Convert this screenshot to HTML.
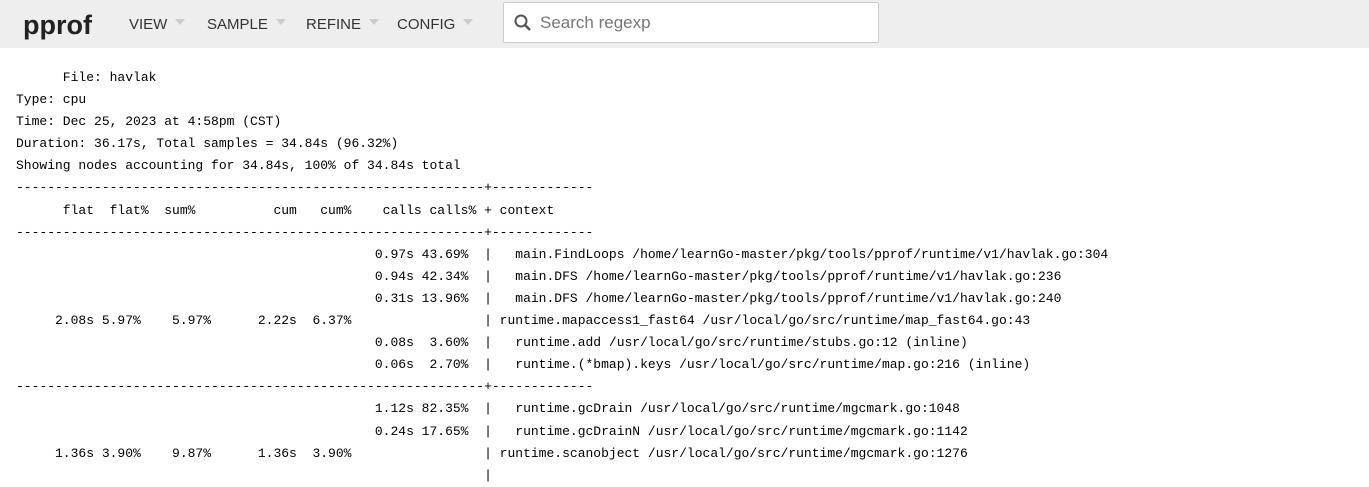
<!DOCTYPE html>
<html><head><meta charset="utf-8"><style>
body{margin:0;background:#fff;width:1369px;height:471px;overflow:hidden;font-family:"Liberation Sans",sans-serif}
.hdr{position:absolute;left:0;top:0;width:1369px;height:48px;background:#eee}
.logo{position:absolute;left:23px;top:10px;font-size:27px;font-weight:bold;color:#222}
.m{position:absolute;top:16px;font-size:15px;color:#333}
.m:after{content:"";display:inline-block;margin-left:8px;border-left:5px solid transparent;border-right:5px solid transparent;border-top:6px solid #ccc;vertical-align:4px}
.search{position:absolute;left:503px;top:2px;width:374px;height:39px;background:#fff;border:1px solid #ccc;border-radius:2px}
.search span{position:absolute;left:36px;top:10px;font-size:17px;color:#777}
pre{position:absolute;left:16px;top:67px;margin:0;font-family:"Liberation Mono",monospace;font-size:13px;line-height:22.1px;color:#000}
</style></head><body>
<div class="hdr">
<div class="logo">pprof</div>
<div class="m" style="left:129px">VIEW</div>
<div class="m" style="left:207px">SAMPLE</div>
<div class="m" style="left:306px">REFINE</div>
<div class="m" style="left:397px">CONFIG</div>
<div class="search"><svg style="position:absolute;left:9px;top:10px" width="20" height="20" viewBox="0 0 20 20"><circle cx="8" cy="8" r="5.5" fill="none" stroke="#555" stroke-width="2"/><path d="M12 12L17 17" stroke="#555" stroke-width="2.5"/></svg><span>Search regexp</span></div>
</div>
<pre>      File: havlak
Type: cpu
Time: Dec 25, 2023 at 4:58pm (CST)
Duration: 36.17s, Total samples = 34.84s (96.32%)
Showing nodes accounting for 34.84s, 100% of 34.84s total
------------------------------------------------------------+-------------
      flat  flat%  sum%          cum   cum%    calls calls% + context
------------------------------------------------------------+-------------
                                              0.97s 43.69%  |   main.FindLoops /home/learnGo-master/pkg/tools/pprof/runtime/v1/havlak.go:304
                                              0.94s 42.34%  |   main.DFS /home/learnGo-master/pkg/tools/pprof/runtime/v1/havlak.go:236
                                              0.31s 13.96%  |   main.DFS /home/learnGo-master/pkg/tools/pprof/runtime/v1/havlak.go:240
     2.08s 5.97%    5.97%      2.22s  6.37%                 | runtime.mapaccess1_fast64 /usr/local/go/src/runtime/map_fast64.go:43
                                              0.08s  3.60%  |   runtime.add /usr/local/go/src/runtime/stubs.go:12 (inline)
                                              0.06s  2.70%  |   runtime.(*bmap).keys /usr/local/go/src/runtime/map.go:216 (inline)
------------------------------------------------------------+-------------
                                              1.12s 82.35%  |   runtime.gcDrain /usr/local/go/src/runtime/mgcmark.go:1048
                                              0.24s 17.65%  |   runtime.gcDrainN /usr/local/go/src/runtime/mgcmark.go:1142
     1.36s 3.90%    9.87%      1.36s  3.90%                 | runtime.scanobject /usr/local/go/src/runtime/mgcmark.go:1276
                                                            |
</pre>
</body></html>
